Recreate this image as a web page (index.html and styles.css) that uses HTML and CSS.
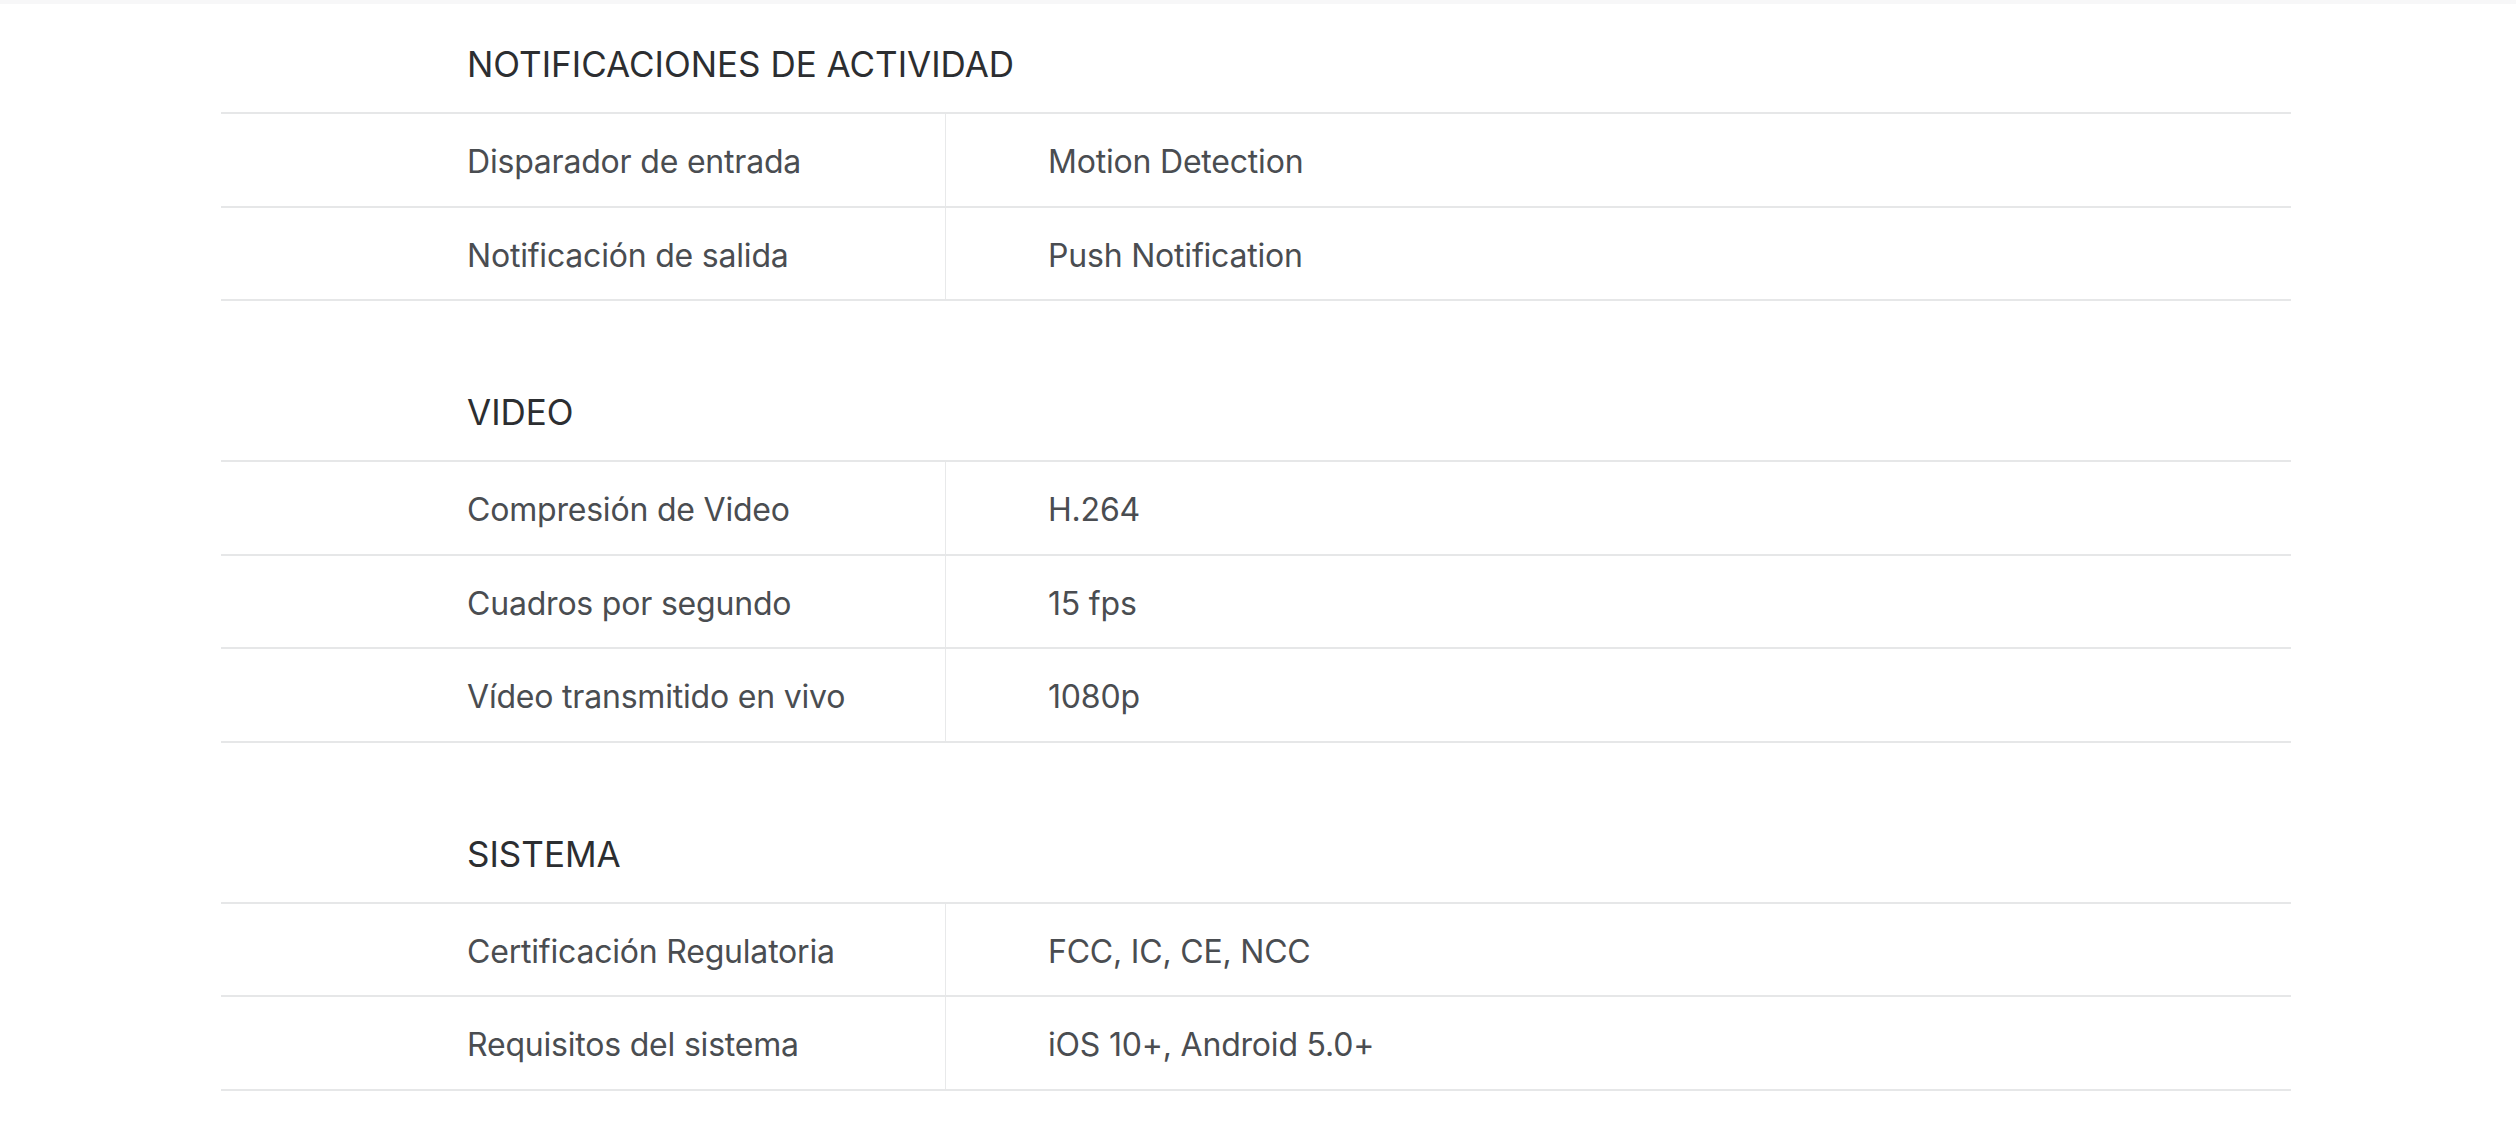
FILE: index.html
```html
<!DOCTYPE html>
<html lang="es">
<head>
<meta charset="utf-8">
<title>Especificaciones</title>
<link rel="stylesheet" href="styles.css">
</head>
<body>
<div class="topbar"></div>
<main class="specs">
  <section class="spec-group">
    <h2 class="spec-title">NOTIFICACIONES DE ACTIVIDAD</h2>
    <div class="spec-table">
      <div class="spec-row"><div class="spec-label">Disparador de entrada</div><div class="spec-value">Motion Detection</div></div>
      <div class="spec-row"><div class="spec-label">Notificación de salida</div><div class="spec-value">Push Notification</div></div>
    </div>
  </section>
  <section class="spec-group">
    <h2 class="spec-title">VIDEO</h2>
    <div class="spec-table">
      <div class="spec-row"><div class="spec-label">Compresión de Video</div><div class="spec-value">H.264</div></div>
      <div class="spec-row"><div class="spec-label">Cuadros por segundo</div><div class="spec-value">15 fps</div></div>
      <div class="spec-row"><div class="spec-label">Vídeo transmitido en vivo</div><div class="spec-value">1080p</div></div>
    </div>
  </section>
  <section class="spec-group">
    <h2 class="spec-title">SISTEMA</h2>
    <div class="spec-table">
      <div class="spec-row"><div class="spec-label">Certificación Regulatoria</div><div class="spec-value">FCC, IC, CE, NCC</div></div>
      <div class="spec-row"><div class="spec-label">Requisitos del sistema</div><div class="spec-value">iOS 10+, Android 5.0+</div></div>
    </div>
  </section>
</main>
</body>
</html>
```
FILE: styles.css
```css
html, body {
  margin: 0;
  padding: 0;
  background: #ffffff;
}
body {
  font-family: Inter, "Liberation Sans", Arial, sans-serif;
  color: #4a4d51;
  overflow: hidden;
}
.topbar {
  height: 4px;
  background: #f7f7f8;
}
.specs {
  width: 2070px;
  margin-left: 221px;
  padding-top: 40px;
}
.spec-group + .spec-group {
  margin-top: 91px;
}
.spec-title {
  margin: 0;
  padding: 0 0 28px 246px;
  font-size: 35px;
  line-height: 40px;
  font-weight: 400;
  color: #2c2e31;
  letter-spacing: 0;
}
.spec-table {
  border-bottom: 2px solid #e6e7e8;
}
.spec-row {
  display: flex;
  height: 91.5px;
  border-top: 2px solid #e6e7e8;
  font-size: 32px;
  letter-spacing: -0.2px;
}
.spec-label {
  width: 725px;
  flex: none;
  box-sizing: border-box;
  padding-left: 246px;
  padding-top: 4px;
  display: flex;
  align-items: center;
  border-right: 1px solid #e8e9ea;
}
.spec-value {
  flex: 1;
  padding-left: 102px;
  padding-top: 4px;
  display: flex;
  align-items: center;
}
```
